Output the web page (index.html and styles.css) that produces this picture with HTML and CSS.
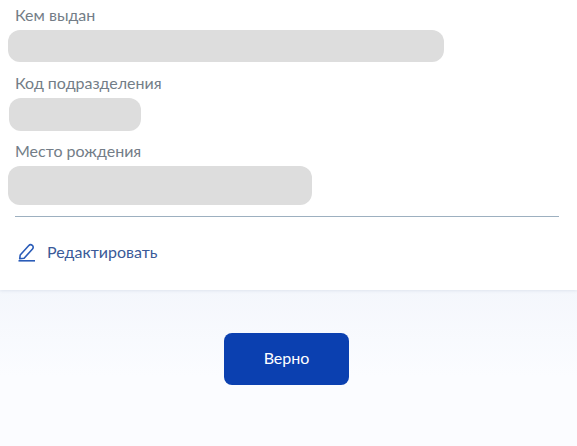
FILE: index.html
```html
<!DOCTYPE html>
<html lang="ru">
<head>
  <meta charset="UTF-8">
  <title>Паспорт</title>
  <link rel="stylesheet" href="styles.css">
</head>
<body>

<div class="card">
  <div class="field">
    <div class="field-label">Кем выдан</div>
    <div class="mask mask-issued"></div>
  </div>
  <div class="field">
    <div class="field-label">Код подразделения</div>
    <div class="mask mask-code"></div>
  </div>
  <div class="field">
    <div class="field-label">Место рождения</div>
    <div class="mask mask-place"></div>
  </div>
  <div class="divider"></div>
  <a class="edit-link" href="#">
    <svg class="edit-icon" width="18" height="19" viewBox="0 0 18 19" fill="none" stroke="#2a5cb8" stroke-width="1.6">
      <path d="M2.200 12 10.600 2.800c1-1.100 2.600-1.300 3.700-.4s1.200 2.500.2 3.600l-8.400 9.200-4.400.6z" stroke-linejoin="round"/>
      <path d="M.5 17.800h16.500"/>
    </svg>
    <span>Редактировать</span>
  </a>
</div>

<div class="actions">
  <button class="btn-primary">Верно</button>
</div>

</body>
</html>
```

FILE: styles.css
```css
* {
  margin: 0;
  padding: 0;
  box-sizing: border-box;
}

html, body {
  height: 100%;
}

body {
  display: flex;
  flex-direction: column;
  background-color: #fbfcff;
  font-family: Lato, "Noto Sans", sans-serif;
  overflow: hidden;
}

.card {
  position: relative;
  height: 290px;
  padding: 5px 18px 0 8px;
  background-color: #fff;
  box-shadow: 0 1px 3px rgba(40, 70, 120, .1);
}

.field {
  margin-bottom: 8px;
}

.field-label {
  height: 20px;
  margin-bottom: 5px;
  padding-left: 7px;
  font-size: 16px;
  line-height: 20px;
  color: #737d87;
}

.mask {
  background-color: #dddddd;
  border-radius: 12px;
}

.mask-issued {
  width: 436px;
  height: 32px;
  margin-bottom: 11px;
}

.mask-code {
  width: 132px;
  height: 33px;
  margin-left: 1px;
  margin-bottom: 10px;
}

.mask-place {
  width: 304px;
  height: 39px;
}

.divider {
  height: 1px;
  margin: 11px 0 0 7px;
  background-color: #9db0c0;
}

.edit-link {
  display: flex;
  align-items: center;
  gap: 11px;
  margin: 25px 0 0 10px;
  font-size: 16px;
  line-height: 20px;
  color: #3a5a98;
  text-decoration: none;
}

.actions {
  flex: 1;
  display: flex;
  justify-content: center;
  align-items: flex-start;
  padding: 43px 4px 0 0;
  background: linear-gradient(#f4f7fc, #fbfcff 55%);
}

.btn-primary {
  width: 125px;
  height: 52px;
  padding-bottom: 3px;
  background-color: #0b40b0;
  border: 0;
  border-radius: 8px;
  font-family: inherit;
  font-size: 16px;
  color: #fff;
}
```
